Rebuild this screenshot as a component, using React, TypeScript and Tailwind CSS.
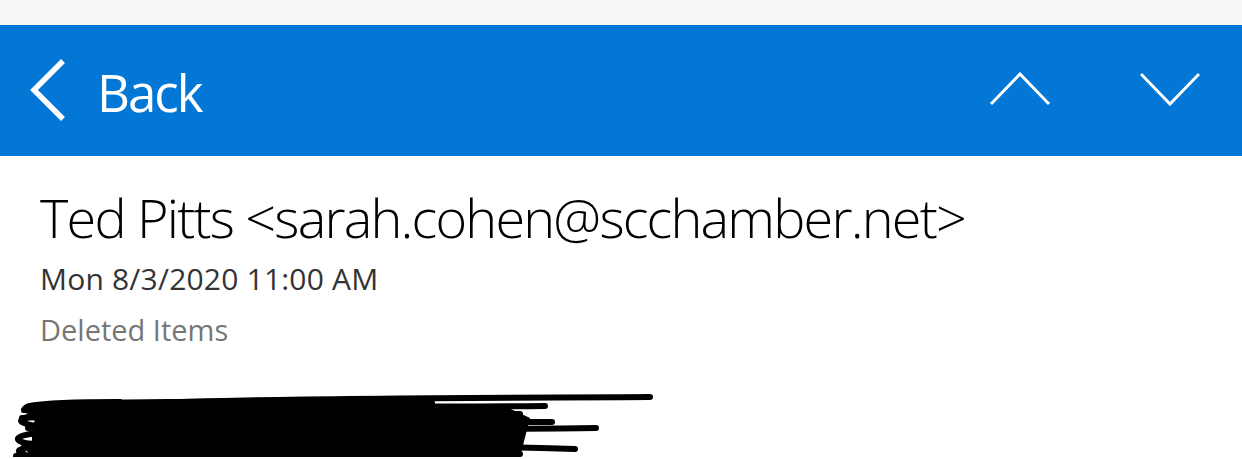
import React from "react";

const font = { fontFamily: '"Open Sans", "Noto Sans", "Liberation Sans", sans-serif' };

function Scribble() {
  // redaction marks over the message body
  const lines = [
    "M180 404 C300 400 450 400 650 399",
    "M30 408 C120 402 250 404 432 405",
    "M24 412 C150 406 300 410 545 408",
    "M22 420 C150 412 320 414 520 416",
    "M28 430 C200 424 380 424 552 424",
    "M35 440 C220 432 420 432 596 430",
    "M24 446 C160 438 360 440 520 438",
    "M30 452 C200 444 400 446 575 451",
    "M16 458 C150 452 350 454 520 456",
    "M40 416 C10 410 20 404 120 404",
    "M36 428 C10 424 14 416 80 416",
    "M30 446 C6 442 14 432 90 434",
    "M24 456 C10 452 20 446 110 446",
  ];
  return (
    <svg width="660" height="79" viewBox="0 380 660 79" className="block">
      <path d="M36 410 L500 406 L530 420 L520 459 L30 459 Z" fill="#000" />
      {lines.map((d, i) => (
        <path key={i} d={d} stroke="#000" strokeWidth="6" strokeLinecap="round" fill="none" />
      ))}
    </svg>
  );
}

export default function App() {
  return (
    <div className="w-[1242px] h-[459px] overflow-hidden bg-white" style={font}>
      <div className="h-[25px] bg-[#f6f6f6]" />
      <div className="h-[131px] bg-[#0277d6] flex items-center justify-between pl-[30px] pr-[42px] text-white">
        <div className="flex items-center">
          <svg width="36" height="62" viewBox="0 0 36 62" className="mt-[-2px]">
            <path d="M33 2 L4 31 L33 60" stroke="#fff" strokeWidth="5.5" fill="none" />
          </svg>
          <span className="ml-[31px] text-[51px] leading-none mt-[4px] tracking-[-2px]">Back</span>
        </div>
        <div className="flex items-center gap-[90px] mt-[-4px]">
          <svg width="60" height="34" viewBox="0 0 60 34">
            <path d="M1 32 L30 2 L59 32" stroke="#fff" strokeWidth="3" fill="none" />
          </svg>
          <svg width="60" height="34" viewBox="0 0 60 34">
            <path d="M1 2 L30 32 L59 2" stroke="#fff" strokeWidth="3" fill="none" />
          </svg>
        </div>
      </div>
      <div className="pl-[40px] pt-[34px]">
        <div className="text-[54px] font-light leading-none text-black tracking-[-1.8px]">
          Ted Pitts &lt;sarah.cohen@scchamber.net&gt;
        </div>
        <div className="mt-[20px] text-[30px] leading-none text-[#333] tracking-[0.2px]">Mon 8/3/2020 11:00 AM</div>
        <div className="mt-[21px] text-[29px] leading-none text-[#767676]">Deleted Items</div>
      </div>
      <div className="mt-[34px]">
        <Scribble />
      </div>
    </div>
  );
}
